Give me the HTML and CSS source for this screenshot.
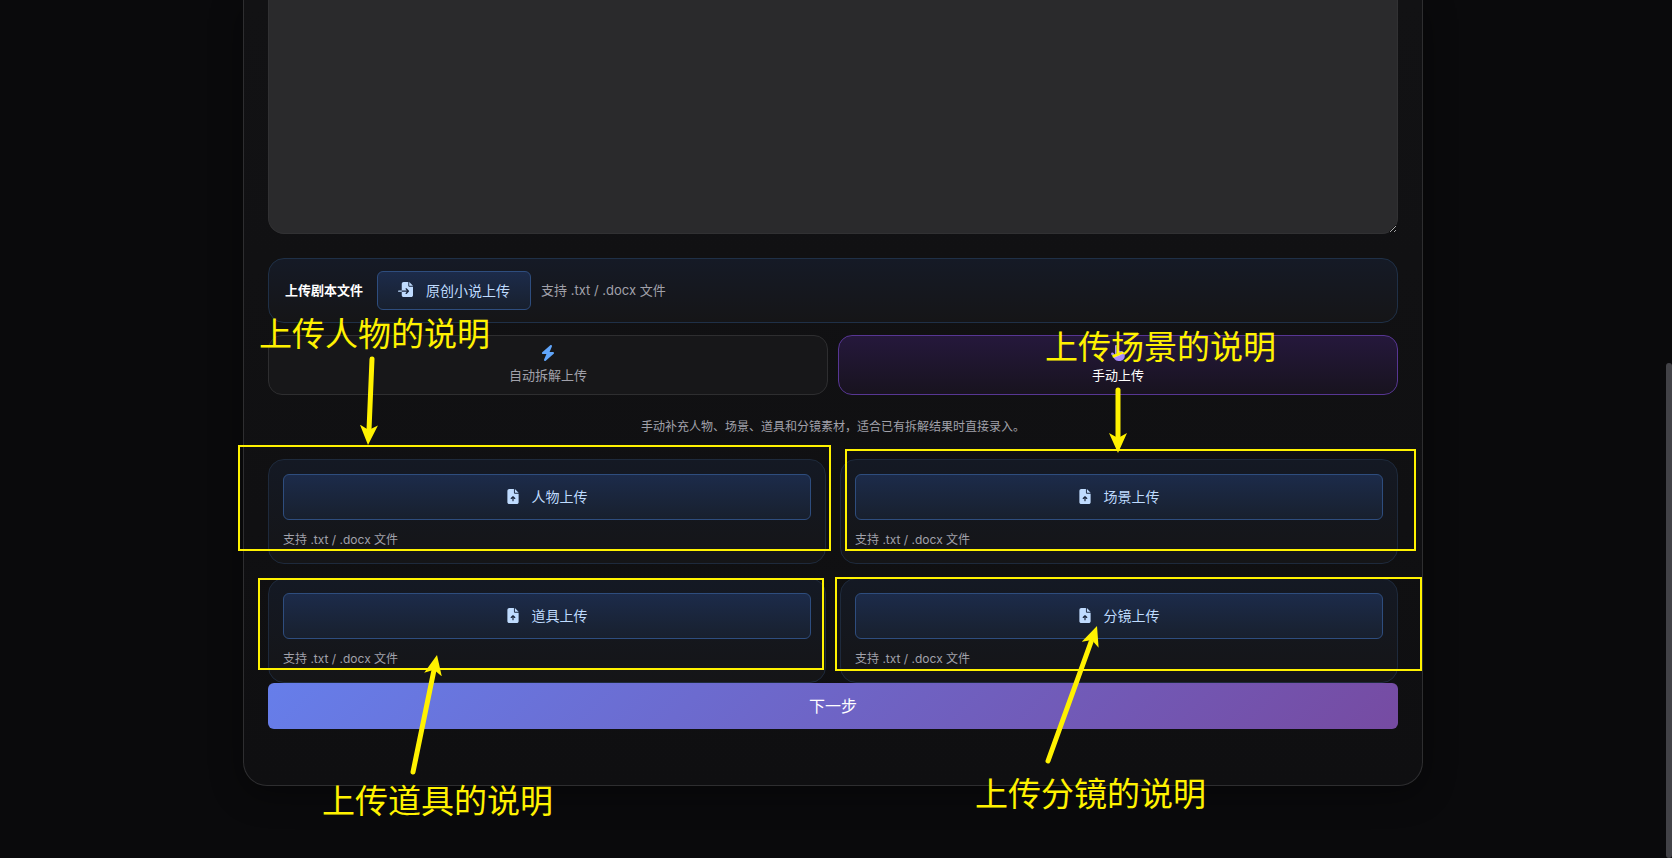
FILE: index.html
```
<!DOCTYPE html>
<html lang="zh-CN">
<head>
  <meta charset="UTF-8">
  <title>上传剧本</title>
  <link rel="stylesheet" href="styles.css">
</head>
<body>

<svg class="sprite" aria-hidden="true">
  <symbol id="file-up" viewBox="0 0 384 512">
    <path fill-rule="evenodd" d="M64 0C29 0 0 29 0 64v384c0 35 29 64 64 64h256c35 0 64-29 64-64V160H256c-18 0-32-14-32-32V0H64zm192 0v128h128L256 0zM212 400c0 11-9 20-20 20s-20-9-20-20v-88l-26 26c-8 8-20 8-28 0s-8-20 0-28l60-60c8-8 20-8 28 0l60 60c8 8 8 20 0 28s-20 8-28 0l-26-26v88z"/>
  </symbol>
  <symbol id="file-import" viewBox="0 0 512 512">
    <path fill-rule="evenodd" d="M128 64c0-35 29-64 64-64h160v128c0 18 14 32 32 32h128v288c0 35-29 64-64 64H192c-35 0-64-29-64-64V332h174l-39 43c-9 9-9 22 0 31s22 9 31 0l80-80c9-9 9-20 0-29l-80-80c-9-9-22-9-31 0s-9 22 0 31l39 44H128V64zM24 292h104v40H24c-13 0-24-9-24-20s11-20 24-20zM512 128H384V0l128 128z"/>
  </symbol>
  <symbol id="bolt" viewBox="0 0 448 512">
    <path d="M349 45c6-14 1-30-11-39s-29-8-41 2L41 232c-10 9-14 23-9 36s17 20 30 20h112L99 467c-6 14-1 30 11 39s29 8 41-2l256-224c10-9 14-23 9-36s-17-20-30-20H274L349 45z"/>
  </symbol>
  <symbol id="hand" viewBox="0 0 448 512">
    <path d="M128 40c0-22 18-40 40-40s40 18 40 40v150c9-8 20-14 34-14 20 0 37 12 44 30 8-9 21-14 34-14 24 0 45 17 48 40 7-5 15-8 24-8 27 0 48 21 48 48v80c0 88-72 160-160 160h-40c-52 0-97-20-127-62L11 306c-15-19-11-46 8-60s46-11 60 8l49 63V40z"/>
  </symbol>
</svg>

<main class="panel">
  <textarea class="script-input" aria-label="剧本内容"></textarea>

  <section class="upload-row">
    <strong class="upload-label">上传剧本文件</strong>
    <button type="button" class="upload-btn inline">
      <svg class="icon wide"><use href="#file-import"/></svg>原创小说上传
    </button>
    <span class="hint">支持 .txt / .docx 文件</span>
  </section>

  <div class="modes">
    <button type="button" class="mode">
      <svg class="icon blue"><use href="#bolt"/></svg>
      <span>自动拆解上传</span>
    </button>
    <button type="button" class="mode active">
      <svg class="icon violet"><use href="#hand"/></svg>
      <span>手动上传</span>
    </button>
  </div>

  <p class="description">手动补充人物、场景、道具和分镜素材，适合已有拆解结果时直接录入。</p>

  <div class="upload-grid">
    <div class="upload-card">
      <button type="button" class="upload-btn"><svg class="icon"><use href="#file-up"/></svg>人物上传</button>
      <span class="hint">支持 .txt / .docx 文件</span>
    </div>
    <div class="upload-card">
      <button type="button" class="upload-btn"><svg class="icon"><use href="#file-up"/></svg>场景上传</button>
      <span class="hint">支持 .txt / .docx 文件</span>
    </div>
    <div class="upload-card">
      <button type="button" class="upload-btn"><svg class="icon"><use href="#file-up"/></svg>道具上传</button>
      <span class="hint">支持 .txt / .docx 文件</span>
    </div>
    <div class="upload-card">
      <button type="button" class="upload-btn"><svg class="icon"><use href="#file-up"/></svg>分镜上传</button>
      <span class="hint">支持 .txt / .docx 文件</span>
    </div>
  </div>

  <button type="button" class="next-btn">下一步</button>

  <!-- annotations over the form -->
  <div class="box box-role"></div>
  <div class="box box-scene"></div>
  <div class="box box-prop"></div>
  <div class="box box-shot"></div>
  <span class="note note-role">上传人物的说明</span>
  <span class="note note-scene">上传场景的说明</span>
  <span class="note note-prop">上传道具的说明</span>
  <span class="note note-shot">上传分镜的说明</span>
  <svg class="arrows" viewBox="243 0 1180 858" aria-hidden="true">
    <defs>
      <marker id="head" viewBox="0 0 20 18" refX="20" refY="9" markerWidth="20" markerHeight="18" markerUnits="userSpaceOnUse" orient="auto">
        <path d="M20 9L0 0l5 9-5 9z"/>
      </marker>
    </defs>
    <path class="shaft" d="M372 359L369 430"/>
    <path class="shaft" d="M1118 390V440"/>
    <path class="shaft" d="M413 772L434 670"/>
    <path class="shaft" d="M1048 761L1091 642"/>
    <path class="tip" d="M372 359L368 445"/>
    <path class="tip" d="M1118 390V453"/>
    <path class="tip" d="M413 772L437 655"/>
    <path class="tip" d="M1048 761L1097 626"/>
  </svg>
</main>

<div class="scroll-thumb"></div>

</body>
</html>
```
FILE: styles.css
```
* {
  box-sizing: border-box;
}

body {
  margin: 0;
  padding: 0 6px 0 0;
  min-height: 100vh;
  background: #0a0a0c;
  color: #fff;
  font-family: Inter, "Noto Sans CJK SC", sans-serif;
  font-size: 13px;
  overflow: hidden;
}

button {
  font-family: inherit;
  cursor: pointer;
}

.sprite {
  display: none;
}

.panel {
  position: relative;
  max-width: 1180px;
  margin: 0 auto;
  padding: 0 24px 56px;
  background: linear-gradient(#121214, #0f0f11);
  border: 1px solid #2e2e30;
  border-top: none;
  border-radius: 0 0 24px 24px;
  box-shadow: 0 8px 32px rgba(0, 0, 0, 0.4);
}

.script-input {
  display: block;
  width: 100%;
  height: 234px;
  padding: 16px;
  background: #2a2a2c;
  border: 1px solid #313133;
  border-top: none;
  border-radius: 0 0 16px 16px;
  color: #fff;
  resize: vertical;
}

.upload-row {
  display: flex;
  align-items: center;
  margin-top: 24px;
  padding: 12px 16px;
  background: linear-gradient(#151a26, #151517);
  border: 1px solid #1f3047;
  border-radius: 16px;
}

.upload-label {
  margin-right: 14px;
  padding-bottom: 2px;
}

.icon {
  width: 12px;
  height: 15px;
  fill: currentColor;
}

.icon.wide {
  width: 15px;
}

.icon.blue {
  width: 14px;
  height: 16px;
  fill: #60a5fa;
}

.icon.violet {
  width: 14px;
  height: 16px;
  fill: #a78bfa;
}

.upload-btn {
  display: flex;
  align-items: center;
  justify-content: center;
  gap: 13px;
  height: 46px;
  padding: 0 20px 2px;
  background: linear-gradient(#1c2b4a, #18202e);
  border: 1px solid #2e4d7e;
  border-radius: 6px;
  color: #bfdbfe;
  font-size: 14px;
}

.upload-btn.inline {
  height: 39px;
  margin-right: 10px;
}

.hint {
  color: #a1a1aa;
  font-size: 13px;
}

.upload-row .hint {
  padding-bottom: 2px;
}

.modes {
  display: grid;
  grid-template-columns: 1fr 1fr;
  gap: 10px;
  margin-top: 12px;
}

.mode {
  display: flex;
  flex-direction: column;
  align-items: center;
  justify-content: center;
  gap: 5px;
  height: 60px;
  padding: 0 6px 2px;
  background: #171719;
  border: 1px solid #2e2e30;
  border-radius: 14px;
  color: #a1a1aa;
  font-size: 13px;
  line-height: 18px;
}

.mode.active {
  background: linear-gradient(#25183c, #18131f);
  border-color: #573693;
  color: #fff;
}

.description {
  margin: 22px 0;
  color: #a1a1aa;
  font-size: 12px;
  line-height: 20px;
  text-align: center;
}

.upload-grid {
  display: grid;
  grid-template-columns: 1fr 1fr;
  gap: 14px;
}

.upload-card {
  display: flex;
  flex-direction: column;
  gap: 10px;
  padding: 14px;
  background: linear-gradient(#141924, #151517);
  border: 1px solid #1e2a3c;
  border-radius: 16px;
}

.upload-card .hint {
  font-size: 12px;
  line-height: 19px;
}

.next-btn {
  display: block;
  width: 100%;
  height: 46px;
  padding: 0 6px 2px;
  background: linear-gradient(135deg, #667eea, #764ba2);
  border: none;
  border-radius: 6px;
  color: #fff;
  font-size: 16px;
}

/* annotations */
.box {
  position: absolute;
  border: 2px solid #fff200;
}

.box-role {
  left: -6px;
  top: 445px;
  width: 593px;
  height: 106px;
}

.box-scene {
  left: 601px;
  top: 449px;
  width: 571px;
  height: 102px;
}

.box-prop {
  left: 14px;
  top: 578px;
  width: 566px;
  height: 92px;
}

.box-shot {
  left: 591px;
  top: 577px;
  width: 587px;
  height: 94px;
}

.note {
  position: absolute;
  color: #fff200;
  font-family: "Noto Sans CJK SC", sans-serif;
  font-size: 33px;
  line-height: 40px;
  white-space: nowrap;
}

.note-role {
  left: 15px;
  top: 312px;
}

.note-scene {
  left: 801px;
  top: 325px;
}

.note-prop {
  left: 78px;
  top: 779px;
}

.note-shot {
  left: 731px;
  top: 772px;
}

.arrows {
  position: absolute;
  left: -1px;
  top: 0;
  width: 1180px;
  height: 858px;
  fill: #fff200;
  pointer-events: none;
}

.shaft {
  stroke: #fff200;
  stroke-width: 5;
  stroke-linecap: round;
}

.tip {
  marker-end: url(#head);
}

.scroll-thumb {
  position: fixed;
  right: 0;
  top: 363px;
  bottom: 0;
  width: 6px;
  background: #424247;
  border-radius: 3px;
}
```
